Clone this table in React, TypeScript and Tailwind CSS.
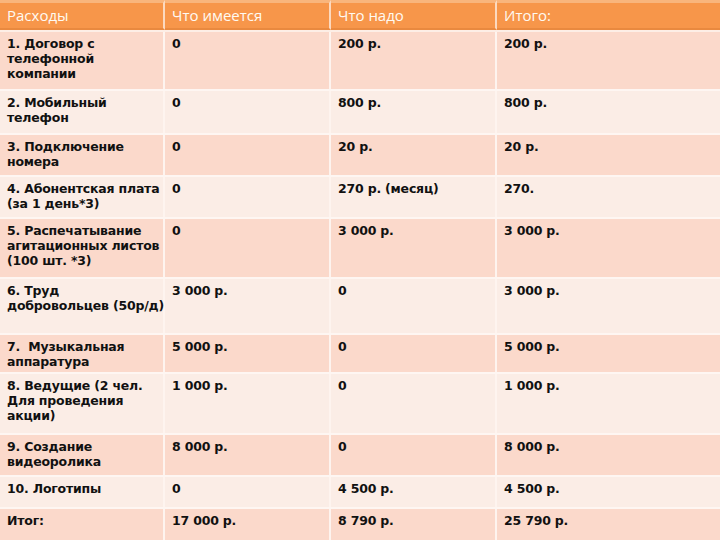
const ROWS: { h: string; cells: string[][] }[] = [
  { h: "h-[57px]", cells: [["1. Договор с", "телефонной", "компании"], ["0"], ["200 р."], ["200 р."]] },
  { h: "h-[42px]", cells: [["2. Мобильный", "телефон"], ["0"], ["800 р."], ["800 р."]] },
  { h: "h-[40px]", cells: [["3. Подключение", "номера"], ["0"], ["20 р."], ["20 р."]] },
  { h: "h-[40px]", cells: [["4. Абонентская плата", "(за 1 день*3)"], ["0"], ["270 р. (месяц)"], ["270."]] },
  {
    h: "h-[58px]",
    cells: [["5. Распечатывание", "агитационных листов", "(100 шт. *3)"], ["0"], ["3 000 р."], ["3 000 р."]],
  },
  { h: "h-[54px]", cells: [["6. Труд", "добровольцев (50р/д)"], ["3 000 р."], ["0"], ["3 000 р."]] },
  { h: "h-[37px]", cells: [["7.  Музыкальная", "аппаратура"], ["5 000 р."], ["0"], ["5 000 р."]] },
  {
    h: "h-[59px]",
    cells: [["8. Ведущие (2 чел.", "Для проведения", "акции)"], ["1 000 р."], ["0"], ["1 000 р."]],
  },
  { h: "h-[40px]", cells: [["9. Создание", "видеоролика"], ["8 000 р."], ["0"], ["8 000 р."]] },
  { h: "h-[30px]", cells: [["10. Логотипы"], ["0"], ["4 500 р."], ["4 500 р."]] },
  { h: "h-[31px]", cells: [["Итог:"], ["17 000 р."], ["8 790 р."], ["25 790 р."]] },
];

const HEAD = ["Расходы", "Что имеется", "Что надо", "Итого:"];

const COLS = "grid grid-cols-[165px_166px_166px_1fr]";

export default function App() {
  return (
    <div className="h-[540px] w-[720px] overflow-hidden bg-[#fbece4]">
      {/* header row */}
      <div className={`${COLS} h-[32px] border-b-2 border-[#fdeee6]`}>
        {HEAD.map((t, i) => (
          <div
            key={t}
            className={`flex items-center bg-[#f7964a] border-t-[3px] border-t-[#f9b57c] border-b-2 border-b-[#e9893f] pl-[7px] font-['Open_Sans',sans-serif] text-[15px] font-medium text-[#fffaf2] ${
              i < 3 ? "border-r-2 border-r-[#fcd9bf]" : ""
            }`}
          >
            {t}
          </div>
        ))}
      </div>

      {ROWS.map((row, ri) => (
        <div
          key={ri}
          className={`${COLS} ${row.h} box-content ${ri < ROWS.length - 1 ? "border-b-2 border-[#fef6f2]" : ""} ${
            ri % 2 === 0 ? "bg-[#fbd9cb]" : "bg-[#fbede6]"
          }`}
        >
          {row.cells.map((lines, ci) => (
            <div
              key={ci}
              className={`pl-[7px] pt-[4px] font-['DejaVu_Sans',sans-serif] text-[12.5px] leading-[15px] tracking-[-0.2px] font-bold text-[#111] ${
                ci < 3 ? "border-r-2 border-[#fef4ef]" : ""
              }`}
            >
              {lines.map((l, li) => (
                <div key={li} className="whitespace-pre">
                  {l}
                </div>
              ))}
            </div>
          ))}
        </div>
      ))}
    </div>
  );
}
